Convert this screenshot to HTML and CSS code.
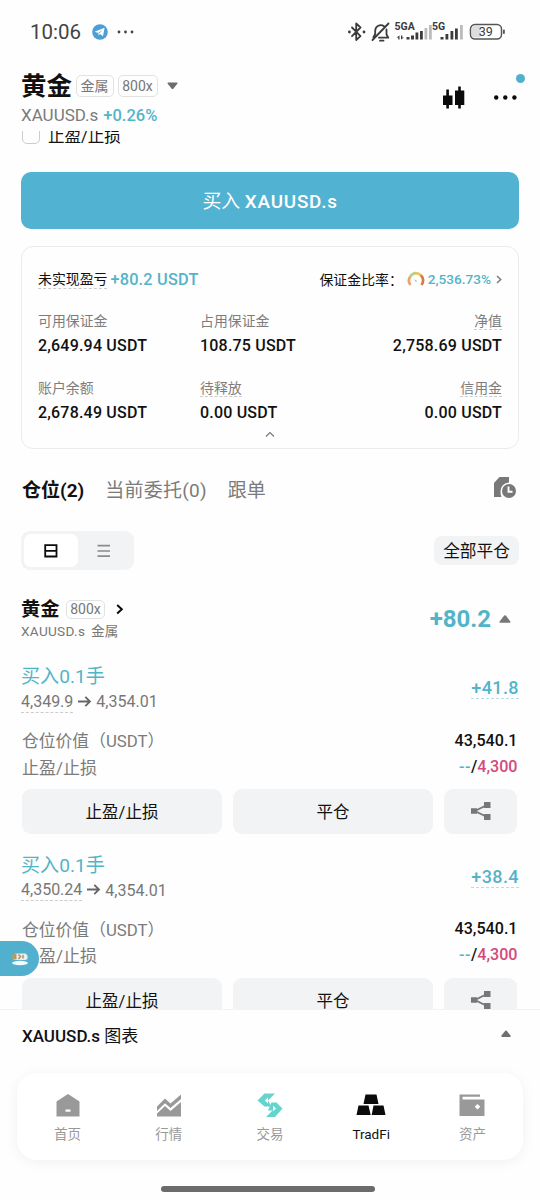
FILE: index.html
```html
<!DOCTYPE html>
<html lang="zh-CN">
<head>
<meta charset="utf-8">
<title>XAUUSD.s</title>
<link rel="stylesheet" href="styles.css">
</head>
<body>
<div class="phone">
  <div class="status">
    <span class="time">10:06</span>
    <svg class="tg" width="16" height="16" viewBox="0 0 16 16"><circle cx="8" cy="8" r="7.8" fill="#4b9fd5"/><path d="M2.600 7.800 12.600 3.800 11 12.200 8 10 6.600 11.400 6.300 9z" fill="#fff"/><path d="M6.300 9 10.500 5.800 7.200 9.400z" fill="#4b9fd5"/></svg>
    <svg class="more-s" width="18" height="4" viewBox="0 0 18 4"><g fill="#444"><circle cx="2" cy="2" r="1.400"/><circle cx="8.500" cy="2" r="1.400"/><circle cx="15" cy="2" r="1.400"/></g></svg>
    <svg class="sys" width="160" height="24" viewBox="0 0 160 24">
      <g fill="none" stroke="#3b3b3b" stroke-width="1.800" stroke-linejoin="round" stroke-linecap="round">
        <path d="M4 7.500 12.500 16.200 8.200 20V3.500L12.500 7.500 4 16.200"/>
        <path d="M27.200 14V10.500a5.600 5.600 0 0 1 8.800-4.300M38.500 9.500v5l1.800 3.200H31M27.200 14l-1.800 3.200M24.500 20 40.500 3.500M32 20.700h3.500"/>
      </g>
      <circle cx="1.400" cy="12" r="1.400" fill="#3b3b3b"/><circle cx="16" cy="12" r="1.400" fill="#3b3b3b"/>
      <g fill="#3b3b3b"><path d="M48.500 17.500l3-2v4h-1.300v-2zM56 17.500l-3 2v-4h1.300v2z"/>
        <rect x="58.500" y="17" width="3" height="2.500"/><rect x="63" y="15.500" width="3" height="4"/><rect x="67.500" y="12.500" width="2.800" height="7"/><rect x="72" y="11" width="2.800" height="8.500"/>
        <rect x="92.500" y="17" width="3" height="2.500"/><rect x="97.500" y="14" width="2.800" height="5.500"/><rect x="102.500" y="11" width="2.800" height="8.500"/><rect x="107" y="8.500" width="2.800" height="11"/></g>
      <g fill="#bbb"><rect x="76.500" y="8" width="2.800" height="11.500"/><rect x="81" y="5" width="2.800" height="14.500"/><rect x="112" y="5" width="2.800" height="14.500"/></g>
      <rect x="122.500" y="4.500" width="31" height="14.500" rx="4.500" fill="#fff" stroke="#555" stroke-width="1.500"/><path d="M126 6h6.500v11.500H126a2 2 0 0 1-2-2V8a2 2 0 0 1 2-2z" fill="#ddd"/><rect x="155" y="9.500" width="1.800" height="4.500" rx=".8" fill="#555"/>
      <g font-family="Roboto, sans-serif" fill="#3b3b3b"><text x="46.500" y="10" font-size="10.500" font-weight="700">5GA</text><text x="84" y="10" font-size="10.500" font-weight="700">5G</text><text x="130.800" y="16.300" font-size="12.500">39</text></g>
    </svg>
  </div>

  <header class="head">
    <div class="head-main">
      <div class="title-row"><h1>黄金</h1><span class="tag">金属</span><span class="tag lev">800x</span><svg class="drop" width="11" height="8" viewBox="0 0 11 8"><path d="M1 0.500h9q.8 .3 .3 1.200L6.300 6.800q-.8 .7-1.600 0L.7 1.700Q.2 .8 1 .5z" fill="#6c6c6c"/></svg></div>
      <div class="sub-row"><span class="sym">XAUUSD.s</span><span class="chg">+0.26%</span></div>
    </div>
    <svg class="candle" width="22" height="24" viewBox="0 0 22 24"><path d="M0 9.500h9.500v9.500H0zM3.300 3.500h2.600v19H3.300zM12 4.500h9.300V19H12zM15.200 .5h2.600v22h-2.600z" fill="#0b0b0b"/></svg>
    <div class="menu"><svg width="24" height="6" viewBox="0 0 24 6"><g fill="#0b0b0b"><circle cx="2.200" cy="2.500" r="2.200"/><circle cx="11.300" cy="2.500" r="2.200"/><circle cx="20.400" cy="2.500" r="2.200"/></g></svg><i class="dot"></i></div>
  </header>

  <main class="scroll">
    <div class="check-row"><i class="check"></i><span>止盈/止损</span></div>
    <button class="buy">买入 <b>XAUUSD.s</b></button>

    <section class="card">
      <div class="card-top">
        <span class="upl"><span class="dash pl">未实现盈亏</span><b class="plv">+80.2 USDT</b></span>
        <span class="ratio"><span class="rl">保证金比率：</span><svg width="18" height="16" viewBox="0 0 18 16"><g fill="none" stroke-width="2.700"><path d="M3.500 14A7 7 0 0 1 3.300 5.500" stroke="#f0a070"/><path d="M3.200 5.700A7 7 0 0 1 9 2.200" stroke="#b8d080"/><path d="M8.800 2.200A7 7 0 0 1 14 4.500" stroke="#e8c560"/><path d="M13.800 4.300A7 7 0 0 1 14.500 14" stroke="#d97b45"/></g><path d="M7 8l3 2-1 1z" fill="#79bda5"/></svg><b>2,536.73%</b><svg class="chev" width="6" height="9" viewBox="0 0 6 9"><path d="M1 1l3.700 3.500L1 8" fill="none" stroke="#7b7b7b" stroke-width="1.500"/></svg></span>
      </div>
      <div class="stats">
        <div><label>可用保证金</label><b>2,649.94 USDT</b></div>
        <div><label>占用保证金</label><b>108.75 USDT</b></div>
        <div class="r"><label class="dash">净值</label><b>2,758.69 USDT</b></div>
        <div><label>账户余额</label><b>2,678.49 USDT</b></div>
        <div><label class="dash">待释放</label><b>0.00 USDT</b></div>
        <div class="r"><label class="dash">信用金</label><b>0.00 USDT</b></div>
      </div>
      <svg class="fold" width="10" height="7" viewBox="0 0 10 7"><path d="M1 5.500l4-4 4 4" fill="none" stroke="#777" stroke-width="1.200"/></svg>
    </section>

    <nav class="tabs"><b>仓位(2)</b><span class="t2">当前委托(0)</span><span class="t3">跟单</span>
      <svg width="24" height="24" viewBox="0 0 24 24"><path d="M1 7 6.500 1H16v5.500A8.500 8.500 0 0 0 7.500 15.500c0 2 .3 4 1 5.500H1z" fill="#787878"/><circle cx="16" cy="15" r="7" fill="#787878"/><path d="M15.500 10.500v5.200h4" fill="none" stroke="#fff" stroke-width="1.900"/></svg>
    </nav>

    <div class="tools">
      <div class="toggle">
        <span class="on"><svg width="14" height="14" viewBox="0 0 14 14"><path d="M1.200 1.200h11.300v11.300H1.200zM1.200 6.900h11.300" fill="none" stroke="#0b0b0b" stroke-width="1.800"/></svg></span>
        <span><svg width="14" height="14" viewBox="0 0 14 14"><path d="M.5 1.700h12.500M.5 7h12.500M.5 12.200h12.500" stroke="#8b8b8b" stroke-width="1.700"/></svg></span>
      </div>
      <button class="close-all">全部平仓</button>
    </div>

    <section class="inst">
      <div>
        <div class="inst-name"><h2>黄金</h2><span class="tag">800x</span><svg width="8" height="11" viewBox="0 0 8 11"><path d="M1.200 1l4.600 4.300L1.200 9.600" fill="none" stroke="#0b0b0b" stroke-width="2"/></svg></div>
        <div class="inst-sub">XAUUSD.s <span>金属</span></div>
      </div>
      <div class="total"><b>+80.2</b><svg width="12" height="9" viewBox="0 0 12 9"><path d="M5.200 .6q.8-.7 1.600 0l4.500 5.800v1.400H.6V6.400z" fill="#787878"/></svg></div>
    </section>

    <article class="pos">
      <div class="pos-head">
        <div><div class="side">买入0.1手</div><div class="prices"><span class="dash">4,349.9</span><svg width="15" height="13" viewBox="0 0 15 13"><path d="M1 5.500h12M8.300 .8l4.700 4.700-4.700 4.700" fill="none" stroke="#666" stroke-width="1.800"/></svg><span>4,354.01</span></div></div>
        <b class="pnl dash">+41.8</b>
      </div>
      <div class="kv"><span class="k1">仓位价值（USDT）</span><b>43,540.1</b></div>
      <div class="kv"><span>止盈/止损</span><b><i>--</i>/<em>4,300</em></b></div>
      <div class="acts"><button>止盈/止损</button><button>平仓</button><button class="share"><svg width="20" height="18" viewBox="0 0 20 18"><path d="M16 3 4 9l12 6" fill="none" stroke="#777" stroke-width="1.900"/><path d="M0 6.300h6v5.400H0zM13 0h6.500v6H13zM13 12h6.500v6H13z" fill="#777"/></svg></button></div>
    </article>

    <article class="pos">
      <div class="pos-head">
        <div><div class="side">买入0.1手</div><div class="prices"><span class="dash">4,350.24</span><svg width="15" height="13" viewBox="0 0 15 13"><path d="M1 5.500h12M8.300 .8l4.700 4.700-4.700 4.700" fill="none" stroke="#666" stroke-width="1.800"/></svg><span>4,354.01</span></div></div>
        <b class="pnl dash">+38.4</b>
      </div>
      <div class="kv"><span class="k1">仓位价值（USDT）</span><b>43,540.1</b></div>
      <div class="kv"><span>止盈/止损</span><b><i>--</i>/<em>4,300</em></b></div>
      <div class="acts"><button>止盈/止损</button><button>平仓</button><button class="share"><svg width="20" height="18" viewBox="0 0 20 18"><path d="M16 3 4 9l12 6" fill="none" stroke="#777" stroke-width="1.900"/><path d="M0 6.300h6v5.400H0zM13 0h6.500v6H13zM13 12h6.500v6H13z" fill="#777"/></svg></button></div>
    </article>
  </main>

  <div class="bubble"><svg width="18" height="14" viewBox="0 0 18 14"><path d="M1 4.500 4 1.500h10.500l2 2v3.500l-2 1H3z" fill="#e9eeea"/><path d="M0 4.500 3 1.500h2.500v6H3z" fill="#bb9a58"/><path d="M7.500 2.500l2 2-2 2.500M12 3v3.500" fill="none" stroke="#a98c5c" stroke-width="1.400"/><ellipse cx="9" cy="11" rx="8" ry="2.200" fill="#f4fafa"/></svg></div>

  <div class="chart-bar"><span>XAUUSD.s <span class="cn">图表</span></span><svg width="10" height="8" viewBox="0 0 10 8"><path d="M4.300 .8q.7-.7 1.400 0l3.800 4.700V7H.5V5.500z" fill="#6f6f6f"/></svg></div>

  <nav class="bottom">
    <a><svg width="26" height="26" viewBox="0 0 26 26"><path d="M1.500 8.500 13 1l11.500 7.500V23.500h-23z" fill="#999"/><path d="M10.500 16.500h5v2.200h-5z" fill="#fff"/></svg>首页</a>
    <a><svg width="26" height="26" viewBox="0 0 26 26"><path d="M1 13.500 9 5.500l5.500 5L25 1.500V6L14.500 15 9 10.200 1 18zM1 20.500 9 13l5.500 5L25 9v14.500H1z" fill="#999"/></svg>行情</a>
    <a><svg width="28" height="26" viewBox="0 0 28 26"><path d="M8.500 0.500H19L12 7.500l3.500 6H8.500L1.500 7.500z" fill="#66d3cd"/><path d="M15.500 9.500h5l6 6-7.500 8.500H10l6.500-6.500H12z" fill="#66d3cd"/><path d="M12 4.500 8.800 7.500 12 10.500zM17 12.800l3 2.700-3 2.700z" fill="#fff"/></svg>交易</a>
    <a class="active"><svg width="30" height="26" viewBox="0 0 30 26"><path d="M9.500 1.500h11l2 9.500h-15zM2.500 12.500h10l2.200 9.500H.5zM17.500 12.500h10l2 9.500H15.700z" fill="#0b0b0b"/></svg>TradFi</a>
    <a><svg width="26" height="26" viewBox="0 0 26 26"><path d="M.5 1.500h20.500v2.300H3.500v2.700H25.500v16.500H.5z" fill="#999"/><path d="M18.500 11l2.800 2.800-2.800 2.800-2.800-2.800z" fill="#fff"/></svg>资产</a>
  </nav>
  <div class="home"></div>
</div>
</body>
</html>
```

FILE: styles.css
```css
* { box-sizing: border-box; }
body { margin: 0; background: #fefefe; font-family: Roboto, "Noto Sans CJK SC", sans-serif; color: #111; }
h1, h2 { margin: 0; }
b { font-weight: 500; }
i, em { font-style: normal; }
svg { display: block; flex: none; }
button { border: 0; padding: 0; font: inherit; color: inherit; }
.phone { position: relative; width: 540px; height: 1200px; overflow: hidden; display: flex; flex-direction: column; white-space: nowrap; }

.status { height: 64px; display: flex; align-items: center; padding: 0 32px 0 30px; flex: none; }
.time { font-size: 20.5px; color: #444; margin-right: 11px; }
.more-s { margin-left: 9px; }
.sys { margin-left: auto; }

.head { height: 67px; flex: none; display: flex; padding: 0 21px; background: #fefefe; z-index: 1; }
.head-main { flex: 1; }
.title-row { display: flex; align-items: center; height: 40px; padding-top: 4px; }
.title-row h1 { font-size: 25.5px; font-weight: 700; line-height: 34px; margin-right: 3.5px; }
.tag { border: 1px solid #e2e2e2; border-radius: 5px; color: #777; font-size: 14px; height: 22px; line-height: 20px; width: 38px; text-align: center; }
.lev { margin-left: 4px; width: 40px; }
.drop { margin-left: 9px; }
.sub-row { line-height: 22px; font-size: 17px; color: #7a7a7a; }
.chg { font-weight: 500; font-size: 16.5px; color: #52b4c8; margin-left: 5px; }
.candle { margin-top: 22px; }
.menu { position: relative; width: 25px; margin-left: 29px; padding-top: 31px; }
.dot { position: absolute; left: 22px; top: 10px; width: 9px; height: 9px; border-radius: 50%; background: #52b0cd; }

.scroll { height: 878px; flex: none; overflow: hidden; padding: 0 21px; }
.check-row { display: flex; align-items: center; height: 20px; margin-top: -6px; font-size: 16.5px; }
.check { width: 18px; height: 18px; border: 1.5px solid #ccc; border-radius: 5px; margin: 0 8px 0 1px; }
.buy { display: block; width: 498px; height: 57px; margin-top: 27px; border-radius: 10px; background: #52b2d2; color: #fff; font-size: 18.9px; padding-bottom: 2px; }
.buy b { letter-spacing: 0.75px; }

.card { height: 203px; margin-top: 17px; border: 1.5px solid #ebebeb; border-radius: 12px; padding: 20px 16px 0; display: flex; flex-direction: column; }
.card-top { display: flex; justify-content: space-between; align-items: center; height: 24px; font-size: 13.9px; }
.upl { display: flex; align-items: center; }
.dash { border-bottom: 1px dashed #ccc; }
.pl { line-height: 18px; }
.plv { font-size: 16.3px; letter-spacing: 0.2px; color: #52b4c8; margin-left: 3px; }
.ratio { display: flex; align-items: center; height: 22px; }
.rl { padding-bottom: 1px; }
.ratio svg { margin-left: 4px; }
.ratio b { font-size: 13.6px; color: #52b4c8; margin-left: 3px; }
.ratio .chev { margin-left: 5px; }
.stats { display: grid; grid-template-columns: 162px 1fr 1fr; margin-top: 21px; row-gap: 19px; }
.stats > div { display: flex; flex-direction: column; align-items: flex-start; height: 48px; }
.stats .r { align-items: flex-end; }
.stats label { font-size: 13.9px; color: #7d7d7d; line-height: 18px; height: 18px; }
.stats b { font-size: 16px; line-height: 20px; margin-top: 6px; letter-spacing: 0.2px; }
.fold { align-self: center; margin-top: 4px; }

.tabs { display: flex; align-items: center; height: 38px; margin-top: 20px; font-size: 19px; color: #7b7b7b; padding-left: 1px; }
.tabs b { font-weight: 700; color: #111; }
.t2 { margin-left: 21px; letter-spacing: 0.25px; }
.t3 { margin-left: 21px; }
.tabs svg { margin: 0 2px 0 auto; }
.tools { display: flex; align-items: center; justify-content: space-between; margin-top: 24px; height: 39px; }
.toggle { display: flex; width: 113px; height: 39px; background: #f2f3f4; border-radius: 9px; padding: 3px; }
.toggle span { flex: 1; display: flex; align-items: center; justify-content: center; }
.toggle .on { background: #fff; border-radius: 7px; }
.close-all { width: 85px; height: 29px; background: #f2f3f4; border-radius: 8px; font-size: 16.7px; padding-bottom: 2px; }

.inst { display: flex; justify-content: space-between; align-items: center; height: 48px; margin-top: 24px; }
.inst-name { display: flex; align-items: center; height: 26px; padding-top: 1px; }
.inst-name h2 { font-size: 19.3px; font-weight: 700; line-height: 26px; margin-right: 6.4px; }
.inst-name .tag { width: 39px; height: 19px; line-height: 17px; }
.inst-name svg { margin-left: 11px; }
.inst-sub { font-size: 13.6px; line-height: 18px; color: #777; letter-spacing: 0.3px; }
.inst-sub span { margin-left: 2px; }
.total { display: flex; align-items: center; color: #52b4c8; padding-top: 2px; }
.total b { font-size: 24px; font-weight: 700; }
.total svg { margin: 0 8px 0 8px; }

.pos { height: 188.500px; padding-top: 22px; }
.pos-head { display: flex; justify-content: space-between; align-items: center; height: 50px; }
.side { font-size: 19.1px; line-height: 26px; color: #52b4c8; }
.prices { display: flex; align-items: center; font-size: 16px; color: #777; height: 24px; }
.prices .dash { line-height: 20px; }
.prices svg { margin: 0 4px; }
.prices svg + span { padding-bottom: 1px; }
.pnl { font-size: 18px; letter-spacing: 0.4px; color: #52b4c8; line-height: 21px; border-color: #bcdce2; margin-bottom: 2px; }
.kv { display: flex; justify-content: space-between; align-items: center; height: 26px; padding: 0 1.500px 0 1px; font-size: 17px; color: #7b7b7b; }
.k1 { font-size: 16.8px; }
.pos-head + .kv { margin-top: 13px; }
.kv b { color: #111; font-size: 16.1px; }
.kv i { color: #52b4c8; letter-spacing: 0.5px; }
.kv em { color: #d4497c; }
.acts { display: grid; grid-template-columns: 200px 200px 73px; gap: 11px; padding-left: 1px; margin-top: 10px; }
.acts button { height: 45px; border-radius: 9px; background: #f2f3f4; font-size: 16.5px; padding-bottom: 1px; }
.share { display: flex; align-items: center; justify-content: center; }

.bubble { position: absolute; left: 0; top: 941px; width: 39px; height: 35px; border-radius: 0 18px 18px 0; background: #52b0cf; display: flex; align-items: center; padding-left: 11px; }
.chart-bar { height: 51px; flex: none; display: flex; justify-content: space-between; align-items: center; padding: 0 29px 2px 22px; border-top: 1px solid #f3f3f3; font-size: 17px; font-weight: 500; }
.cn { font-weight: 400; }
.bottom { width: 506px; height: 87px; flex: none; margin: 13px 0 0 17px; border-radius: 20px; background: #fff; box-shadow: 0 2px 14px rgba(0, 0, 0, 0.06); display: grid; grid-template-columns: repeat(5, 1fr); }
.bottom a { display: flex; flex-direction: column; align-items: center; font-size: 13.5px; line-height: 18px; color: #999; padding-top: 20px; }
.bottom svg { height: 26px; margin-bottom: 6px; }
.bottom .active { color: #111; }
.home { width: 214px; height: 6px; border-radius: 3px; background: #6b6b6b; margin: 26px 0 0 161px; flex: none; }
```
